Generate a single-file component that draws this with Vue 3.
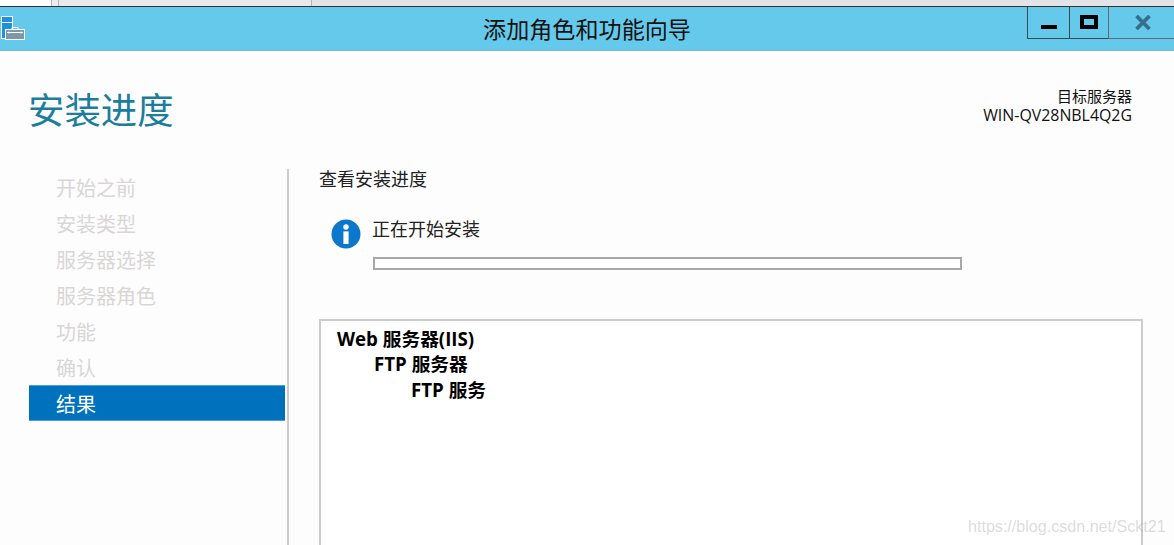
<script setup>
const steps = ['开始之前', '安装类型', '服务器选择', '服务器角色', '功能', '确认', '结果']
const features = [
  { label: 'Web 服务器(IIS)', level: 0 },
  { label: 'FTP 服务器', level: 1 },
  { label: 'FTP 服务', level: 2 },
]
</script>

<template>
  <div class="page">
    <div class="tabs">
      <div class="tab tab-a"></div>
      <div class="tab tab-b"></div>
      <div class="tab tab-c"></div>
      <div class="tab tab-d"></div>
    </div>

    <div class="titlebar">
      <svg class="app-icon" width="26" height="34" viewBox="0 0 26 34">
        <rect x="1.5" y="0.5" width="11" height="22" fill="#2090dc" stroke="#fff" />
        <path d="M1.5 6.5h11" stroke="#fff" />
        <path d="M12 13.5v-2h6v2" fill="none" stroke="#fff" />
        <rect x="5.5" y="13.5" width="19" height="10" fill="#7c97ab" stroke="#fff" />
        <path d="M7 16.5h16M9 15.5v2M21 15.5v2" stroke="#fff" />
      </svg>
      <div class="window-title">添加角色和功能向导</div>
      <div class="controls">
        <div class="ctrl ctrl-min"><span class="min-glyph"></span></div>
        <div class="ctrl ctrl-max"><span class="max-glyph"></span></div>
        <div class="ctrl ctrl-close">
          <svg width="16" height="15" viewBox="0 0 16 15">
            <path d="M1.5 1l13 13M14.5 1l-13 13" stroke="#356f8c" stroke-width="3.8" fill="none" />
          </svg>
        </div>
      </div>
    </div>

    <div class="content">
      <header class="head">
        <h1 class="page-title">安装进度</h1>
        <div class="target">
          <div class="target-label">目标服务器</div>
          <div>WIN-QV28NBL4Q2G</div>
        </div>
      </header>

      <div class="body">
        <nav class="sidebar">
          <div
            v-for="(s, i) in steps"
            :key="s"
            class="step"
            :class="{ active: i === steps.length - 1 }"
          >{{ s }}</div>
        </nav>

        <main class="main">
          <div class="subtitle">查看安装进度</div>
          <div class="status">
            <svg class="info" width="30" height="30" viewBox="0 0 30 30">
              <circle cx="15" cy="15" r="14.5" fill="#0b78cc" />
              <circle cx="15" cy="8" r="2.7" fill="#fff" />
              <rect x="12.4" y="12.4" width="5.2" height="12.6" fill="#fff" />
            </svg>
            <div class="status-col">
              <div class="status-text">正在开始安装</div>
              <div class="bar"></div>
            </div>
          </div>
          <div class="box">
            <div
              v-for="f in features"
              :key="f.label"
              class="feature"
              :class="'lvl' + f.level"
            >{{ f.label }}</div>
          </div>
        </main>
      </div>
    </div>

    <div class="watermark">https://blog.csdn.net/Sckt21</div>
  </div>
</template>

<style scoped>
.page {
  position: relative;
  width: 1174px;
  height: 545px;
  overflow: hidden;
  background: #fdfdfd;
  font-family: "Open Sans", "Noto Sans CJK SC", sans-serif;
  color: #1a1a1a;
}
.tabs {
  display: flex;
  height: 6px;
  border-bottom: 1px solid #333;
}
.tab { height: 100%; box-sizing: border-box; }
.tab-a { width: 52px; background: #fff; border-right: 1px solid #b4b4b4; }
.tab-b { width: 7px; background: #ececee; border-right: 1px solid #b4b4b4; }
.tab-c { width: 253px; background: #e9e9eb; border-right: 1px solid #b4b4b4; }
.tab-d { flex: 1; background: #e4e4e6; }
.titlebar {
  position: relative;
  display: flex;
  justify-content: center;
  height: 43px;
  background: #65c9eb;
  border-bottom: 1px solid #7fb6cc;
}
.app-icon { position: absolute; left: 0; top: 9px; }
.window-title {
  font-size: 23.1px;
  line-height: 45px;
  color: #111;
}
.controls {
  position: absolute;
  top: 0;
  right: 0;
  display: flex;
  height: 31px;
}
.ctrl {
  display: flex;
  align-items: center;
  justify-content: center;
  box-sizing: border-box;
  height: 32px;
  border-bottom: 1px solid #3a4a52;
  border-left: 1px solid #3a4a52;
}
.ctrl-min { width: 42px; align-items: flex-end; padding-bottom: 9px; }
.ctrl-max { width: 39px; padding-bottom: 1px; }
.ctrl-close { width: 66px; border-color: #5f6a70; padding-left: 2px; padding-bottom: 1px; }
.min-glyph { width: 16px; height: 4px; background: #000; }
.max-glyph { width: 18px; height: 14px; box-sizing: border-box; border: 4px solid #000; }
.head {
  display: flex;
  justify-content: space-between;
  padding: 0 42px 0 28px;
  height: 118px;
}
.page-title {
  margin: 37px 0 0;
  font-size: 36.4px;
  font-weight: 400;
  line-height: 44px;
  color: #1c7d9c;
}
.target {
  margin-top: 36px;
  text-align: right;
  font-size: 15.9px;
  line-height: 19px;
  color: #111;
}
.target-label { font-size: 15px; }
.body { display: flex; height: 376px; }
.sidebar {
  box-sizing: border-box;
  width: 289px;
  padding: 2px 2px 0 29px;
  border-right: 2px solid #ccc;
}
.step {
  height: 36px;
  padding-left: 27px;
  font-size: 20px;
  line-height: 36px;
  color: #d9d6d6;
}
.step.active {
  margin-top: -2px;
  background: #0072bd;
  color: #fff;
  box-sizing: border-box;
  border: solid #4aa0dc;
  border-width: 1px 0;
  line-height: 37px;
}
.main {
  flex: 1;
  padding-left: 30px;
  padding-right: 31px;
  min-width: 0;
}
.subtitle {
  font-size: 18px;
  line-height: 21px;
  color: #222;
}
.status {
  display: flex;
  margin-top: 18px;
  padding-left: 12px;
  gap: 11px;
}
.info { margin-top: 11px; flex: none; }
.status-col { padding-top: 10px; }
.status-text {
  font-size: 18px;
  line-height: 22px;
  color: #222;
}
.bar {
  box-sizing: border-box;
  width: 589px;
  height: 13px;
  margin-top: 17px;
  margin-left: 1px;
  background: #fff;
  border: 2px solid #a8a8a8;
}
.box {
  box-sizing: border-box;
  height: 300px;
  margin-top: 49px;
  padding-top: 4.5px;
  background: #fff;
  border: 2px solid #ccc;
}
.feature {
  font-size: 18.7px;
  font-weight: 700;
  line-height: 25.5px;
  color: #000;
}
.lvl0 { padding-left: 16px; }
.lvl1 { padding-left: 53px; }
.lvl2 { padding-left: 90px; }
.watermark {
  position: absolute;
  left: 968px;
  top: 517px;
  font-family: "Liberation Sans", sans-serif;
  font-size: 16.1px;
  line-height: 18px;
  color: rgba(170, 170, 170, 0.42);
  white-space: nowrap;
}
</style>
